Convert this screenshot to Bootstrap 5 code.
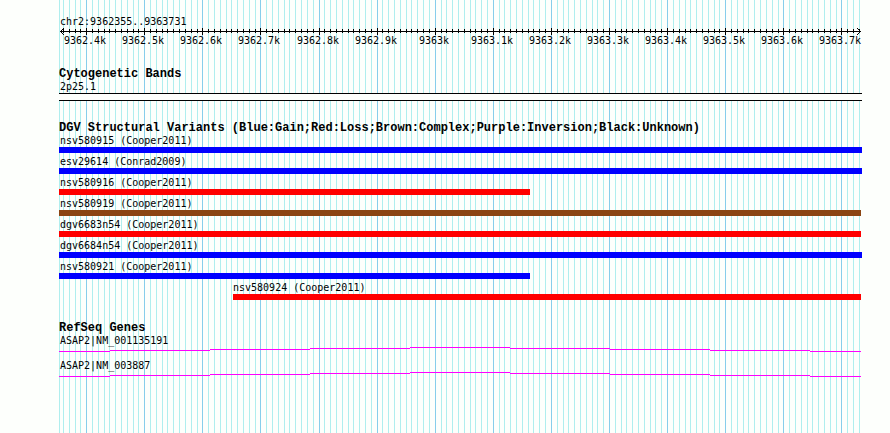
<!DOCTYPE html>
<html lang="en">
<head>
<meta charset="utf-8">
<meta name="viewport" content="width=device-width, initial-scale=1">
<title>chr2:9362355..9363731</title>
<link href="https://cdn.jsdelivr.net/npm/bootstrap@5.3.0/dist/css/bootstrap.min.css" rel="stylesheet">
<style>
  body { background: #fdfffc; color: #000; font: 10px/12px "DejaVu Sans Mono", "Liberation Mono", monospace; }
  .browser-panel { margin: 0 28px 0 59px; padding-top: 16px; }
  .grid-lines { z-index: -1; }
  .region-name, .feature-name { line-height: 12px; padding-left: 1px; white-space: nowrap; margin: 0; }
  .ruler { height: 19px; margin-bottom: 21px; overflow: visible; }
  .track { margin-bottom: 21px; }
  .variants { margin-bottom: 22px; }
  .track-title { font: bold 12px/13px "Liberation Mono", monospace; margin: 0; white-space: nowrap; }
  .band { height: 8px; border: solid #000; border-width: 1px 0; background: #fdfffc; }
  .feature { margin-bottom: 3px; }
  .feature-bar { height: 6px; }
  .gain { background: #00f; }
  .loss { background: #f00; }
  .complex { background: #8b4513; }
  .gene { margin-bottom: 8px; }
  .gene-line { height: 5px; }
  svg { shape-rendering: crispEdges; }
</style>
<script src="https://cdn.jsdelivr.net/npm/bootstrap@5.3.0/dist/js/bootstrap.bundle.min.js"></script>
</head>
<body>
<main class="browser-panel position-relative min-vh-100" id="panel">
  <svg class="grid-lines position-absolute top-0 start-0 w-100 h-100" id="grid" aria-hidden="true"></svg>

  <header>
    <p class="region-name">chr2:9362355..9363731</p>
    <svg class="ruler d-block w-100" id="ruler" role="img" aria-label="Position scale"></svg>
  </header>

  <section class="track">
    <h2 class="track-title">Cytogenetic Bands</h2>
    <p class="feature-name">2p25.1</p>
    <div class="band"></div>
  </section>

  <section class="variants">
    <h2 class="track-title">DGV Structural Variants (Blue:Gain;Red:Loss;Brown:Complex;Purple:Inversion;Black:Unknown)</h2>
    <div class="feature"><p class="feature-name">nsv580915 (Cooper2011)</p><div class="feature-bar gain"></div></div>
    <div class="feature"><p class="feature-name">esv29614 (Conrad2009)</p><div class="feature-bar gain"></div></div>
    <div class="feature"><p class="feature-name">nsv580916 (Cooper2011)</p><div class="feature-bar loss" style="width:58.66%"></div></div>
    <div class="feature"><p class="feature-name">nsv580919 (Cooper2011)</p><div class="feature-bar complex" style="width:99.88%"></div></div>
    <div class="feature"><p class="feature-name">dgv6683n54 (Cooper2011)</p><div class="feature-bar loss" style="width:99.88%"></div></div>
    <div class="feature"><p class="feature-name">dgv6684n54 (Cooper2011)</p><div class="feature-bar gain"></div></div>
    <div class="feature"><p class="feature-name">nsv580921 (Cooper2011)</p><div class="feature-bar gain" style="width:58.66%"></div></div>
    <div class="feature" style="margin-left:21.67%"><p class="feature-name ps-0">nsv580924 (Cooper2011)</p><div class="feature-bar loss" style="width:99.84%"></div></div>
  </section>

  <section>
    <h2 class="track-title">RefSeq Genes</h2>
    <div class="gene"><p class="feature-name">ASAP2|NM_001135191</p><svg class="gene-line d-block w-100" aria-hidden="true"></svg></div>
    <div class="gene"><p class="feature-name">ASAP2|NM_003887</p><svg class="gene-line d-block w-100" aria-hidden="true"></svg></div>
  </section>
</main>
<script>
  const START = 9362355, END = 9363731;
  const rect = (x, y, w, h, fill) => `<rect x="${x}" y="${y}" width="${w}" height="${h}" fill="${fill}"/>`;

  function draw() {
    const width = document.getElementById('panel').clientWidth;
    const scale = (width - 3) / (END - START + 1);
    let grid = rect(0, 0, 1, '100%', '#afeeee');
    let ruler = rect(1, 3, width - 2, 1, '#000');

    for (let pos = Math.ceil(START / 10) * 10; pos <= END; pos += 10) {
      const x = Math.round(1 + (pos - START) * scale);
      const major = pos % 100 === 0;
      grid += rect(x, 0, 1, '100%', major ? '#87ceeb' : '#afeeee');
      ruler += major ? rect(x, 0, 1, 7, '#000') : rect(x, 1, 1, 4, '#000');
      if (major) ruler += `<text x="${x - 1}" y="16" text-anchor="middle">${pos / 1000}k</text>`;
    }
    /* Arrowheads, one pixel per row out from each tip. */
    for (let i = 1; i <= 3; i++) {
      for (const y of [3 - i, 3 + i]) {
        ruler += rect(1 + i, y, 1, 1, '#000') + rect(width - 2 - i, y, 1, 1, '#000');
      }
    }
    document.getElementById('grid').innerHTML = grid;
    document.getElementById('ruler').innerHTML = ruler;

    /* Intron line: nine one-pixel steps, rising to the middle and falling again. */
    const step = (width - 3) / 8;
    const edges = [0, ...Array.from({ length: 8 }, (_, i) => Math.round(1 + step * (i + 0.5))), width - 1];
    const line = edges.slice(1).map((end, i) =>
      rect(edges[i], Math.abs(i - 4), end - edges[i], 1, '#f0f')).join('');
    document.querySelectorAll('.gene-line').forEach(svg => { svg.innerHTML = line; });
  }
  draw();
  window.addEventListener('resize', draw);
</script>
</body>
</html>
